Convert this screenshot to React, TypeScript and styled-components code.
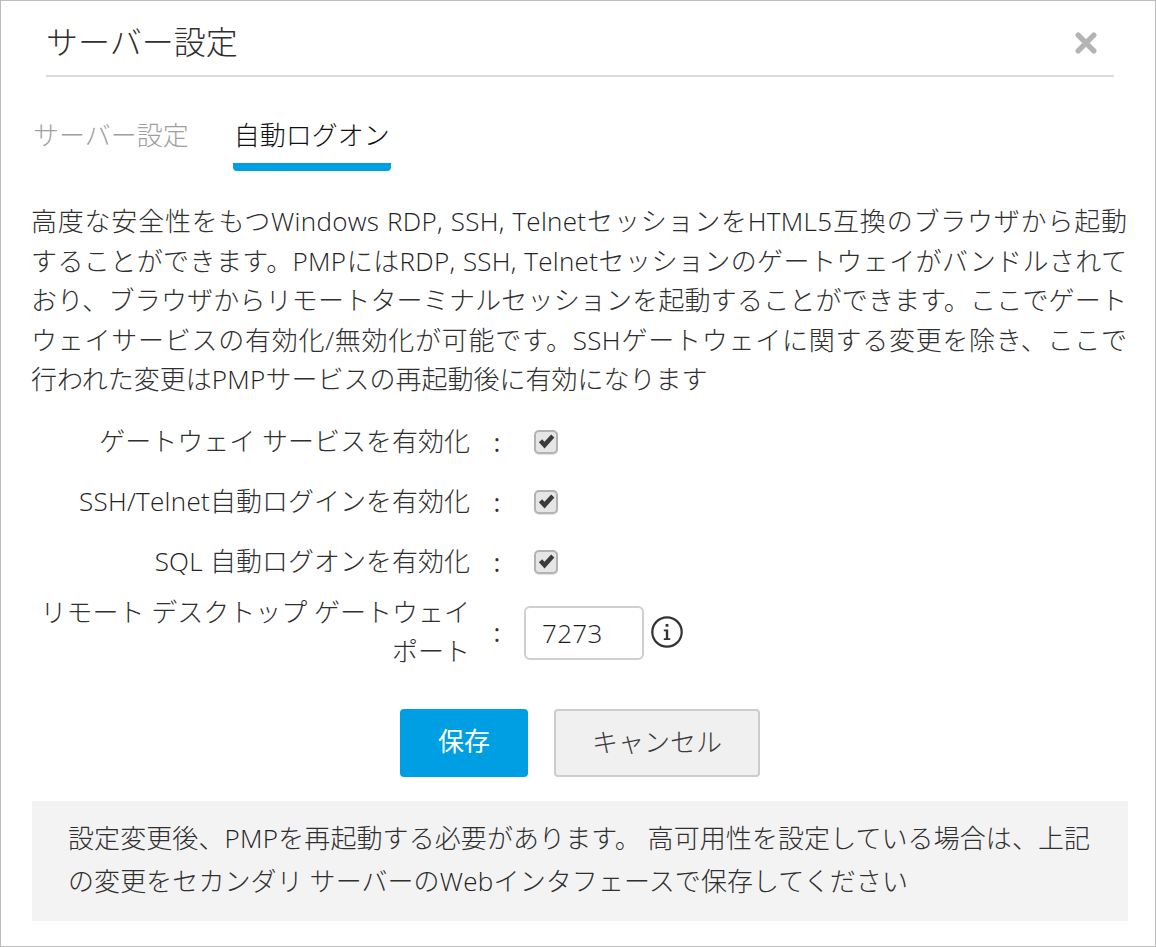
import styled, { createGlobalStyle } from "styled-components";

const FONT = `"Open Sans", "Noto Sans CJK JP", sans-serif`;

const GlobalStyle = createGlobalStyle`
  html, body {
    margin: 0;
    padding: 0;
    background: #fff;
  }
`;

const formRows = [
  "ゲートウェイ サービスを有効化",
  "SSH/Telnet自動ログインを有効化",
  "SQL 自動ログオンを有効化",
];

const descriptionLines = [
  "高度な安全性をもつWindows RDP, SSH, TelnetセッションをHTML5互換のブラウザから起動",
  "することができます。PMPにはRDP, SSH, Telnetセッションのゲートウェイがバンドルされて",
  "おり、ブラウザからリモートターミナルセッションを起動することができます。ここでゲート",
  "ウェイサービスの有効化/無効化が可能です。SSHゲートウェイに関する変更を除き、ここで",
];

// latin words run a bit wider than Open Sans Light on its own
function Mixed({ text }: { text: string }) {
  const parts = text.split(/([A-Za-z0-9][A-Za-z0-9 ,/]*)/);
  return (
    <>
      {parts.map((part, i) =>
        i % 2 === 1 ? <Latin key={i}>{part}</Latin> : part,
      )}
    </>
  );
}

export default function App() {
  return (
    <>
      <GlobalStyle />
      <Dialog>
        <Header>
          <Title>サーバー設定</Title>
          <CloseIcon viewBox="0 0 20 20">
            <path d="M3.5 3.5 L16.5 16.5 M16.5 3.5 L3.5 16.5" />
          </CloseIcon>
        </Header>

        <Tabs>
          <Tab>サーバー設定</Tab>
          <Tab $active>自動ログオン</Tab>
        </Tabs>

        <Description>
          {descriptionLines.map((line) => (
            <JustifiedLine key={line}>
              <Mixed text={line} />
            </JustifiedLine>
          ))}
          <div>
            <Mixed text="行われた変更はPMPサービスの再起動後に有効になります" />
          </div>
        </Description>

        <Form>
          {formRows.map((label) => (
            <Row key={label}>
              <Label>
                <Mixed text={label} />
              </Label>
              <Colon>:</Colon>
              <CheckBox>
                <svg viewBox="0 0 16 14">
                  <path d="M0.8 7.6 L3.9 4.8 L6.1 7.2 L12.4 0.5 L15.4 3.2 L6.2 13.5 Z" />
                </svg>
              </CheckBox>
            </Row>
          ))}
          <Row $tall>
            <Label>
              リモート デスクトップ ゲートウェイ
              <br />
              ポート
            </Label>
            <Colon>:</Colon>
            <PortCell>
              <PortInput readOnly value="7273" />
              <InfoIcon viewBox="0 0 32 32">
                <circle cx="16" cy="16" r="14.7" />
                <path
                  className="glyph"
                  d="M14.6 8h2.8v2.8h-2.8z M12.8 13.6h4.4v8.7h2v1.7h-6.4v-1.7h2v-7h-2z"
                />
              </InfoIcon>
            </PortCell>
          </Row>
        </Form>

        <Actions>
          <SaveButton>保存</SaveButton>
          <CancelButton>キャンセル</CancelButton>
        </Actions>

        <Notice>
          <Mixed text="設定変更後、PMPを再起動する必要があります。 高可用性を設定している場合は、上記" />
          <br />
          <Mixed text="の変更をセカンダリ サーバーのWebインタフェースで保存してください" />
        </Notice>
      </Dialog>
    </>
  );
}

const Dialog = styled.div`
  box-sizing: border-box;
  width: 1156px;
  height: 947px;
  border: 1px solid #bdbdbd;
  background: #fff;
  font-family: ${FONT};
  font-weight: 300;
  color: #2f2f2f;
  overflow: hidden;
`;

const Latin = styled.span`
  letter-spacing: 0.3px;
  color: #222;
`;

const Header = styled.div`
  box-sizing: border-box;
  height: 76px;
  margin: 0 41px 0 45px;
  border-bottom: 2px solid #dcdcdc;
  display: flex;
  align-items: center;
  justify-content: space-between;
`;

const Title = styled.div`
  font-size: 32px;
  line-height: 76px;
  margin-top: 8px;
`;

const CloseIcon = styled.svg`
  width: 24px;
  height: 24px;
  margin-right: 16px;
  margin-top: 9px;

  path {
    fill: none;
    stroke: #b4b4b4;
    stroke-width: 4.5;
    stroke-linecap: round;
  }
`;

const Tabs = styled.div`
  display: flex;
  gap: 43px;
  margin: 0 0 0 31px;
  height: 94px;
  padding-top: 38px;
  box-sizing: border-box;
`;

const Tab = styled.div<{ $active?: boolean }>`
  box-sizing: border-box;
  height: 56px;
  padding: 0 1px;
  font-size: 26px;
  line-height: 40px;
  color: ${({ $active }) => ($active ? "#111" : "#a0a0a0")};
  border-bottom: 8px solid ${({ $active }) => ($active ? "#009ee3" : "transparent")};
  border-radius: 0 0 4px 4px;
`;

const Description = styled.div`
  width: 1096px;
  margin: 31px 0 0 30px;
  font-size: 26px;
  line-height: 39.5px;
`;

const JustifiedLine = styled.div`
  text-align: justify;
  text-align-last: justify;
`;

const Form = styled.div`
  margin: 12px 0 0 31px;
  display: flex;
  flex-direction: column;
`;

const Row = styled.div<{ $tall?: boolean }>`
  display: grid;
  grid-template-columns: 438px 54px 1fr;
  align-items: center;
  height: ${({ $tall }) => ($tall ? "80px" : "60px")};
`;

const Label = styled.div`
  text-align: right;
  font-size: 26px;
  line-height: 39px;
`;

const Colon = styled.div`
  text-align: center;
  font-size: 26px;
  font-weight: 400;
`;

const CheckBox = styled.div`
  box-sizing: border-box;
  width: 24px;
  height: 24px;
  margin-left: 10px;
  border: 2px solid #b3b3b3;
  border-radius: 5px;
  background: #e6e6e6;
  box-shadow: 0 1px 1px #e2e2e2;
  display: flex;
  align-items: center;
  justify-content: center;

  svg {
    width: 17px;
    height: 15px;
    fill: #3c3c3c;
  }
`;

const PortCell = styled.div`
  display: flex;
  align-items: center;
  gap: 7px;
`;

const PortInput = styled.input`
  box-sizing: border-box;
  width: 120px;
  height: 54px;
  margin-top: 2px;
  padding: 0 16px;
  border: 2px solid #cfcfcf;
  border-radius: 6px;
  font-family: ${FONT};
  font-size: 26px;
  font-weight: 300;
  letter-spacing: 0.3px;
  color: #1c1c1c;
  outline: none;
`;

const InfoIcon = styled.svg`
  width: 32px;
  height: 32px;

  circle {
    fill: none;
    stroke: #333;
    stroke-width: 2.2;
  }

  .glyph {
    fill: #333;
  }
`;

const Actions = styled.div`
  margin: 37px 0 0 399px;
  display: flex;
  gap: 26px;
`;

const SaveButton = styled.button`
  box-sizing: border-box;
  width: 128px;
  height: 68px;
  padding-bottom: 6px;
  border: none;
  border-radius: 4px;
  background: #009ee3;
  color: #fff;
  font-family: ${FONT};
  font-size: 26px;
  font-weight: 400;
`;

const CancelButton = styled.button`
  box-sizing: border-box;
  width: 206px;
  height: 68px;
  padding-bottom: 5px;
  border: 2px solid #cccccc;
  border-radius: 4px;
  background: #f0f0f0;
  color: #3a3a3a;
  font-family: ${FONT};
  font-size: 26px;
  font-weight: 300;
`;

const Notice = styled.div`
  box-sizing: border-box;
  margin: 24px 27px 0 31px;
  height: 120px;
  padding: 16px 0 0 36px;
  background: #f3f3f3;
  font-size: 26px;
  line-height: 43px;
  letter-spacing: 0.08px;
  white-space: nowrap;
`;
